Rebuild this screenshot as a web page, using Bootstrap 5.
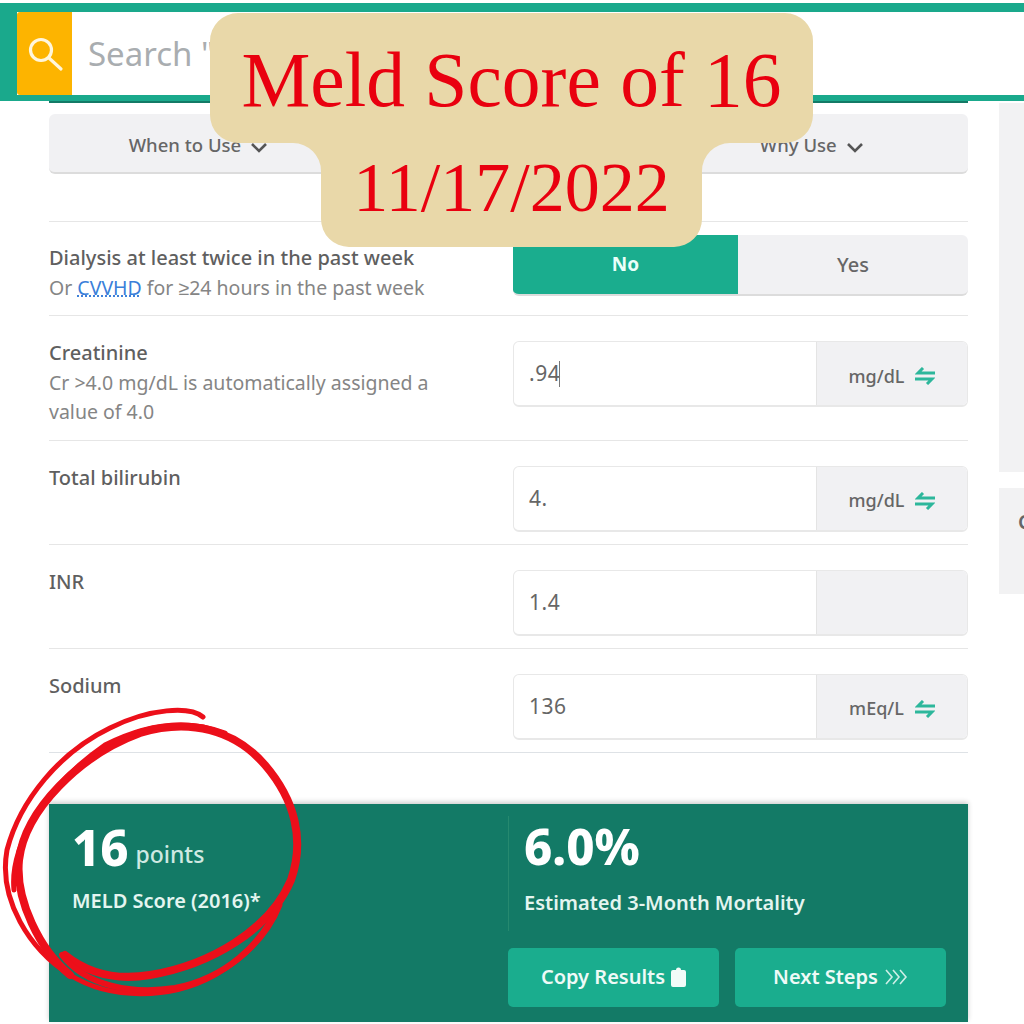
<!DOCTYPE html>
<html lang="en">
<head>
<meta charset="utf-8">
<title>MELD Score</title>
<link href="https://cdn.jsdelivr.net/npm/bootstrap@5.3.0/dist/css/bootstrap.min.css" rel="stylesheet">
<style>
body{font-family:"Noto Sans","Liberation Sans",sans-serif;color:#555;background:#fff;padding-top:3px;height:1024px;overflow:hidden;position:relative}
.top-bar{background:#1aa98c;height:98px;padding:9px 0 6px 17px}
.search-box{height:83px;background:#fff}
.search-ico{width:55px;background:#fdb400;border-radius:3px 0 0 3px}
.search-ph{font-size:33px;color:#a9adb0;padding-left:16px}
.main-col{width:919px;margin-left:49px;border-top:2px solid #137a66}
.side-col{margin-left:31px;flex:1 1 0;min-width:0;margin-top:2px}
.side-a{height:369px;background:#f2f2f3}
.side-b{height:106px;margin-top:16px;background:#f2f2f3;overflow:hidden;padding:19px 0 0 19px;font-size:20px;font-weight:600;color:#666}
.tab-row{margin-top:11px;height:60px;margin-bottom:47px}
.tab-btn{flex:1 1 0;background:#f1f1f3;border:0;border-bottom:2px solid #dcdcdc;border-radius:6px;font-size:18.5px;font-weight:500;color:#666;padding-top:5px}
.tab-btn.right-tab{padding-right:13px}
.calc-row{border-top:1px solid #e6e6e6;padding:25px 0 12px}
.calc-row.first{padding:13px 0 13px}
.calc-row.tall{padding-bottom:13px}
.lbl-col{width:464px;margin-top:-3px;line-height:29.5px}
.first .lbl-col{margin-top:8px}
.lbl{font-size:20px;font-weight:500;color:#5f5f5f}
.sub{font-size:19.5px;color:#858585}
.sub a{color:#3b7fd9;text-decoration:underline dotted}
.ctl-col{flex:1 1 0}
.tog{height:61px;border-radius:6px;overflow:hidden;background:#f1f1f3;border-bottom:2px solid #dcdcdc}
.tog-on{width:225px;background:#1aad8e;color:#eafff9;font-weight:700;font-size:19px}
.tog-off{flex:1 1 0;color:#666;font-weight:500;font-size:20px}
.field{height:66px;border:1px solid #e8e8e8;border-bottom-width:2px;border-radius:6px;overflow:hidden}
.field-in{width:303px;padding-left:15px;padding-top:1px;font-size:21px;color:#666;letter-spacing:.5px;border-right:1px solid #e4e4e4}
.caret-mark{display:inline-block;width:1px;height:26px;background:#777;margin-left:-1px}
.field-unit{flex:1 1 0;background:#f1f1f3;font-size:18px;font-weight:500;color:#666;gap:11px;padding-top:5px}
.result{margin-top:51px;height:218px;background:#137a66;color:#eef9f6;box-shadow:0 -2px 5px rgba(0,0,0,.2)}
.res-left{width:459px;padding:13px 0 0 23px}
.res-big{font-size:49px;font-weight:800;line-height:60px;color:#fff}
.res-pts{font-size:23px;font-weight:500;color:#cfe9e2;margin-left:-6px;vertical-align:3px}
.res-name{font-size:20px;font-weight:600;margin-top:2px;color:#e4f5f0}
.res-right{flex:1 1 0;padding-right:22px;padding-top:11px}
.res-stat{height:115px;border-left:1px solid #26896f;padding:0 0 0 15px}
.res-stat .res-big{margin-top:1px}
.res-stat .res-name{margin-top:12px}
.res-btn{flex:1 1 0;height:59px;margin-top:17px;background:#1aad8e;color:#eefaf7;border:0;border-radius:5px;font-size:20px;font-weight:600;gap:6px}
.stamp{position:absolute;left:210px;top:13px;width:603px;height:234px}
.stamp svg{position:absolute;left:0;top:0}
.stamp-txt{position:relative;font-family:"Liberation Serif",serif;color:#e9000f;text-align:center;font-size:77.5px;line-height:105px;padding-top:15px}
.stamp-date{font-size:70px}
.scribble{position:absolute;left:0;top:700px}
</style>
</head>
<body>
<header class="top-bar">
  <div class="search-box d-flex">
    <div class="search-ico d-flex align-items-center justify-content-center">
      <svg width="38" height="38" viewBox="0 0 38 38" fill="none" stroke="#fff6dc" stroke-width="3.2" stroke-linecap="round"><circle cx="15" cy="15" r="10.5"/><path d="M23 23l12 11"/></svg>
    </div>
    <div class="search-ph d-flex align-items-center">Search "</div>
  </div>
</header>

<div class="d-flex">
  <main class="main-col">
    <div class="tab-row d-flex gap-2">
      <button class="tab-btn">When to Use <svg class="ms-1" width="18" height="11" viewBox="0 0 18 11" fill="none" stroke="#555" stroke-width="2.6"><path d="M2 2l7 7 7-7"/></svg></button>
      <button class="tab-btn" aria-label="Pearls/Pitfalls"></button>
      <button class="tab-btn right-tab">Why Use <svg class="ms-1" width="18" height="11" viewBox="0 0 18 11" fill="none" stroke="#555" stroke-width="2.6"><path d="M2 2l7 7 7-7"/></svg></button>
    </div>

    <section class="calc-row first d-flex">
      <div class="lbl-col">
        <div class="lbl">Dialysis at least twice in the past week</div>
        <div class="sub">Or <a href="#">CVVHD</a> for ≥24 hours in the past week</div>
      </div>
      <div class="ctl-col">
        <div class="tog d-flex">
          <div class="tog-on d-flex align-items-center justify-content-center">No</div>
          <div class="tog-off d-flex align-items-center justify-content-center">Yes</div>
        </div>
      </div>
    </section>

    <section class="calc-row tall d-flex">
      <div class="lbl-col">
        <div class="lbl">Creatinine</div>
        <div class="sub">Cr &gt;4.0 mg/dL is automatically assigned a<br>value of 4.0</div>
      </div>
      <div class="ctl-col">
        <div class="field d-flex">
          <div class="field-in d-flex align-items-center">.94<span class="caret-mark"></span></div>
          <div class="field-unit d-flex align-items-center justify-content-center">mg/dL
            <svg width="20" height="18" viewBox="0 0 20 18" fill="none" stroke="#2db79b" stroke-width="3"><path d="M20 6H3L8 1"/><path d="M0 12h17l-5 5"/></svg>
          </div>
        </div>
      </div>
    </section>

    <section class="calc-row d-flex">
      <div class="lbl-col"><div class="lbl">Total bilirubin</div></div>
      <div class="ctl-col">
        <div class="field d-flex">
          <div class="field-in d-flex align-items-center">4.</div>
          <div class="field-unit d-flex align-items-center justify-content-center">mg/dL
            <svg width="20" height="18" viewBox="0 0 20 18" fill="none" stroke="#2db79b" stroke-width="3"><path d="M20 6H3L8 1"/><path d="M0 12h17l-5 5"/></svg>
          </div>
        </div>
      </div>
    </section>

    <section class="calc-row d-flex">
      <div class="lbl-col"><div class="lbl">INR</div></div>
      <div class="ctl-col">
        <div class="field d-flex">
          <div class="field-in d-flex align-items-center">1.4</div>
          <div class="field-unit"></div>
        </div>
      </div>
    </section>

    <section class="calc-row d-flex border-bottom">
      <div class="lbl-col"><div class="lbl">Sodium</div></div>
      <div class="ctl-col">
        <div class="field d-flex">
          <div class="field-in d-flex align-items-center">136</div>
          <div class="field-unit d-flex align-items-center justify-content-center">mEq/L
            <svg width="20" height="18" viewBox="0 0 20 18" fill="none" stroke="#2db79b" stroke-width="3"><path d="M20 6H3L8 1"/><path d="M0 12h17l-5 5"/></svg>
          </div>
        </div>
      </div>
    </section>

    <section class="result d-flex">
      <div class="res-left">
        <div class="res-big">16 <span class="res-pts">points</span></div>
        <div class="res-name">MELD Score (2016)*</div>
      </div>
      <div class="res-right">
        <div class="res-stat">
          <div class="res-big">6.0%</div>
          <div class="res-name">Estimated 3-Month Mortality</div>
        </div>
        <div class="d-flex gap-3">
          <button class="res-btn d-flex align-items-center justify-content-center">Copy Results
            <svg width="15" height="20" viewBox="0 0 15 20" fill="#f2fbf8"><path d="M2 3h3a2.5 2.5 0 0 1 5 0h3a2 2 0 0 1 2 2v13a2 2 0 0 1-2 2H2a2 2 0 0 1-2-2V5a2 2 0 0 1 2-2z"/></svg>
          </button>
          <button class="res-btn d-flex align-items-center justify-content-center">Next Steps
            <svg width="24" height="18" viewBox="0 0 24 18" fill="none" stroke="#cdeee6" stroke-width="1.6"><path d="M2 2l6 7-6 7M9 2l6 7-6 7M16 2l6 7-6 7"/></svg>
          </button>
        </div>
      </div>
    </section>
  </main>
  <aside class="side-col">
    <div class="side-a"></div>
    <div class="side-b">C</div>
  </aside>
</div>

<svg class="scribble" width="310" height="310" viewBox="0 700 310 310" fill="none" stroke="#ec0f1a" stroke-linecap="round">
  <path stroke-width="5" d="M203 717C190 706 150 708 110 728C60 752 20 800 7 850C-2 900 30 950 70 975C110 1000 170 1000 215 975C250 955 270 930 280 905"/>
  <path stroke-width="8" d="M70 975C40 950 15 900 19 860C25 810 80 755 140 733C190 718 235 730 265 765C295 800 305 840 291 880C270 930 210 965 150 975C120 980 90 975 65 955"/>
  <path stroke-width="6" d="M62 955C85 985 130 995 175 988C225 978 262 945 278 905"/>
  <path stroke-width="5" d="M14 890C10 850 40 790 105 745C150 722 190 720 225 733"/>
</svg>

<div class="stamp">
  <svg width="603" height="234" viewBox="0 0 603 234"><path fill="#e9d8a9" d="M28 0H575a28 28 0 0 1 28 28V102a28 28 0 0 1-28 28H520a28 28 0 0 0-28 28V206a28 28 0 0 1-28 28H139a28 28 0 0 1-28-28V158a28 28 0 0 0-28-28H28a28 28 0 0 1-28-28V28A28 28 0 0 1 28 0z"/></svg>
  <div class="stamp-txt">Meld Score of 16<br><span class="stamp-date">11/17/2022</span></div>
</div>
</body>
</html>
